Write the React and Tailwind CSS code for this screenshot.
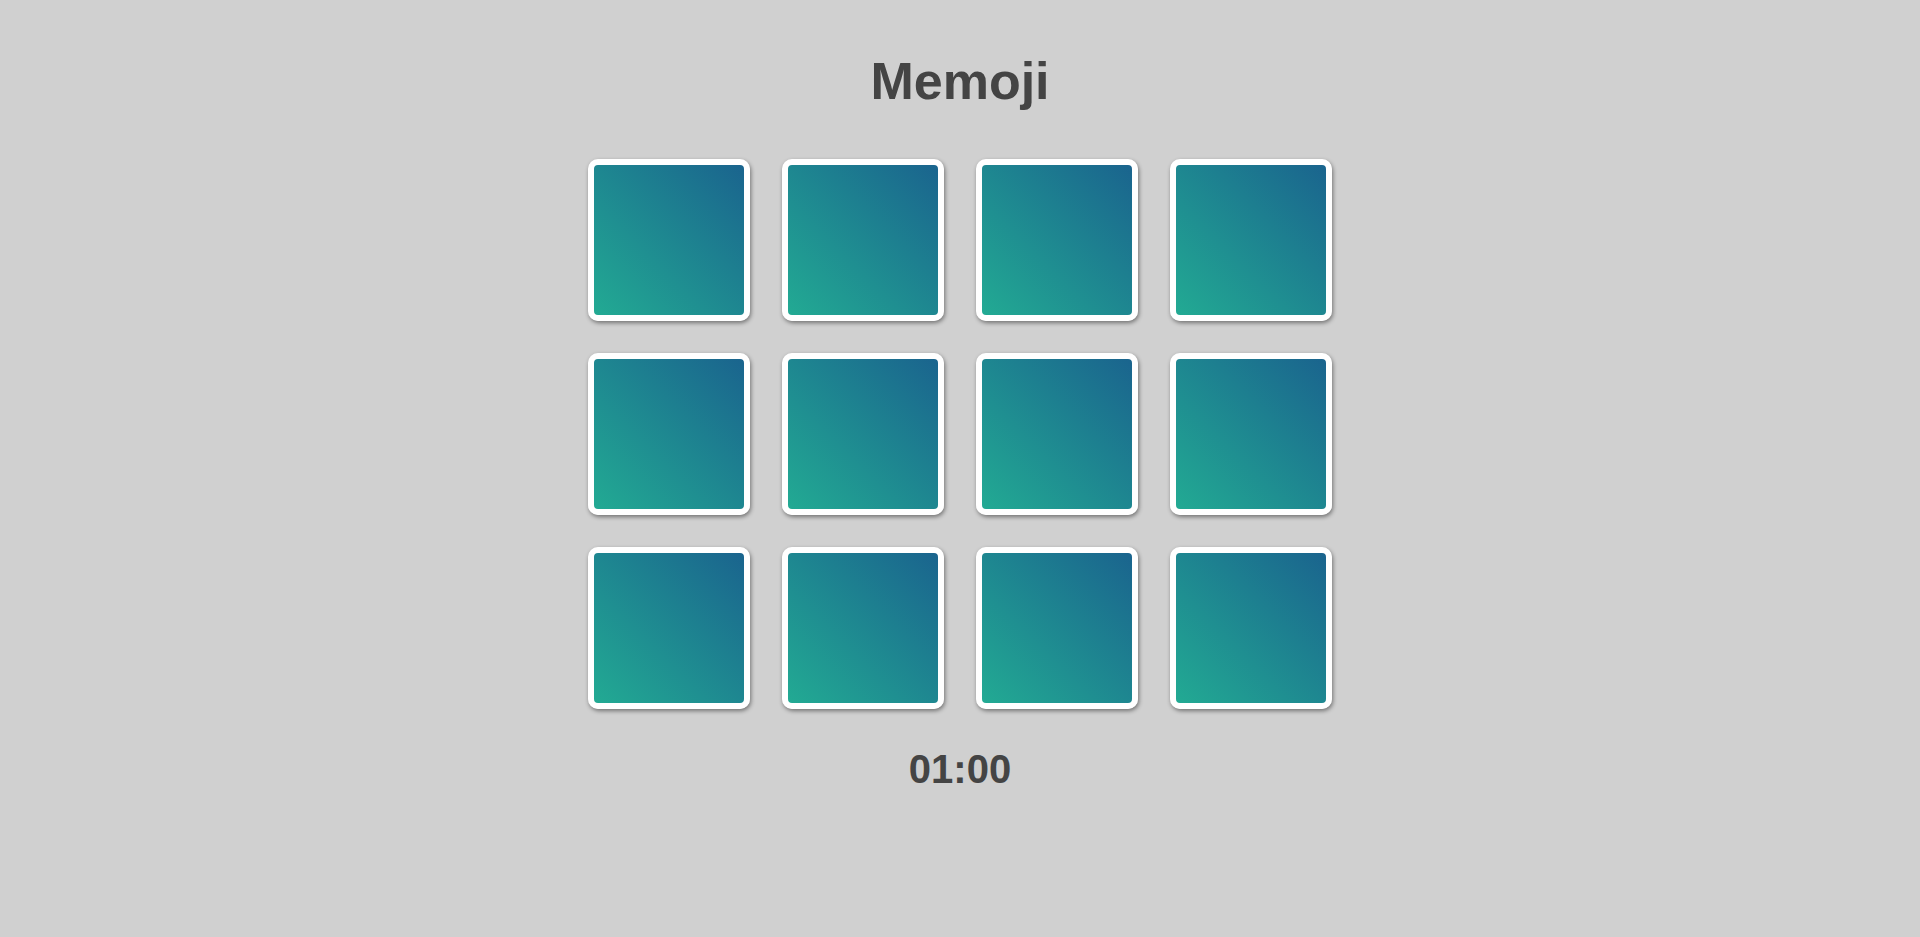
import React from 'react';

const cards = Array.from({ length: 12 }, (_, i) => i);

const App = () => {
  return (
    <div
      className="min-h-screen bg-[#d0d0d0] flex flex-col items-center pt-[50px] text-[#444444]"
      style={{ fontFamily: '"Liberation Sans", Arial, sans-serif' }}
    >
      <h1 className="text-[52px] leading-[62px] font-bold">Memoji</h1>
      <div className="mt-[47px] grid grid-cols-4 gap-[32px]">
        {cards.map((card) => (
          <div
            key={card}
            className="w-[162px] h-[162px] border-[6px] border-white rounded-[10px] bg-[linear-gradient(to_top_right,#22aa93,#1a648e)] shadow-[1px_2px_4px_rgba(0,0,0,0.45)] cursor-pointer"
          ></div>
        ))}
      </div>
      <div className="mt-[37px] text-[40px] leading-[46px] font-bold">01:00</div>
    </div>
  );
};

export default App;
